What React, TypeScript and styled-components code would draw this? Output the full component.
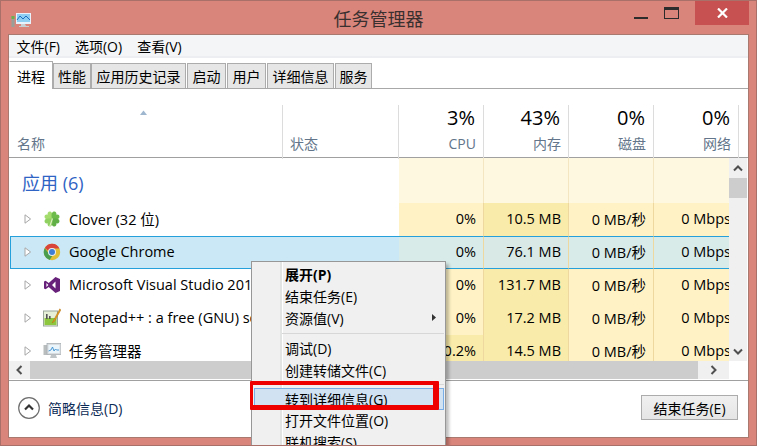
import React from 'react';
import styled, { createGlobalStyle } from 'styled-components';

const GlobalStyle = createGlobalStyle`
  html, body {
    margin: 0;
    padding: 0;
    overflow: hidden;
    background: #d9857b;
  }
  * { box-sizing: border-box; }
`;

const Window = styled.div`
  position: relative;
  width: 757px;
  height: 446px;
  overflow: hidden;
  display: flex;
  flex-direction: column;
  padding: 0 7px 7px;
  background: #d9857b;
  border: 1px solid #a9706a;
  font-family: "Open Sans", "Noto Sans CJK SC", sans-serif;
  font-size: 14px;
  color: #000;
`;

const TitleBar = styled.div`
  position: relative;
  height: 33px;
  flex: none;
  display: flex;
  align-items: center;
  justify-content: center;
  font-size: 18px;
  color: #3a3030;
  padding-top: 1px;
`;

const TitleIcon = styled.svg`
  position: absolute;
  left: 3px;
  top: 10px;
`;

const WindowButtons = styled.div`
  position: absolute;
  right: 0;
  top: 0;
  display: flex;
  align-items: flex-start;
`;

const MinMax = styled.div`
  width: 31px;
  height: 24px;
  display: flex;
  justify-content: center;
`;

const MinIcon = styled.div`
  width: 14px;
  height: 2px;
  margin-top: 16px;
  background: #2c2c2c;
`;

const MaxIcon = styled.div`
  width: 15px;
  height: 12px;
  margin-top: 6px;
  border: 1px solid #2c2c2c;
  border-top-width: 3px;
`;

const CloseButton = styled.div`
  width: 54px;
  height: 24px;
  margin-left: 8px;
  background: #c75050;
  display: flex;
  align-items: center;
  justify-content: center;
`;

const Client = styled.div`
  width: 741px;
  height: 404px;
  flex: none;
  display: flex;
  flex-direction: column;
  background: #fff;
  border: 1px solid #a9786f;
`;

const MenuBar = styled.div`
  height: 23px;
  flex: none;
  display: flex;
  align-items: center;
  padding-top: 1px;
  background: #f4f5f7;
  border-bottom: 2px solid #eceef1;
`;

const MenuEntry = styled.span`
  padding: 0 7.5px;
  white-space: nowrap;
`;

const TabRow = styled.div`
  height: 31px;
  flex: none;
  display: flex;
  align-items: flex-end;
  border-bottom: 1px solid #a8a8a8;
`;

const Tab = styled.div<{ $active?: boolean; $width: number; $gap: number }>`
  width: ${(p) => p.$width}px;
  margin-left: ${(p) => p.$gap}px;
  height: ${(p) => (p.$active ? '28px' : '25px')};
  margin-bottom: ${(p) => (p.$active ? '-1px' : '0')};
  display: flex;
  align-items: center;
  justify-content: center;
  white-space: nowrap;
  background: ${(p) => (p.$active ? '#fff' : '#e6e6e6')};
  border: 1px solid #acacac;
  border-bottom: ${(p) => (p.$active ? 'none' : '0')};
  border-left-color: ${(p) => (p.$active ? '#fff' : '#acacac')};
  position: relative;
`;

const HeaderRow = styled.div`
  height: 69px;
  flex: none;
  padding-top: 16px;
  display: grid;
  grid-template-columns: 274px 116px repeat(4, 85px) 9px;
  border-bottom: 1px solid #a0a0a0;
`;

const HeaderCell = styled.div<{ $align?: 'left' | 'right'; $inset?: number }>`
  display: flex;
  flex-direction: column;
  justify-content: flex-end;
  align-items: ${(p) => (p.$align === 'left' ? 'flex-start' : 'flex-end')};
  padding: 0 7px 5px ${(p) => p.$inset ?? 8}px;
  border-right: 1px solid #dcdcdc;
`;

const SortArrow = styled.svg`
  align-self: center;
  margin: 0 0 19px -6px;
`;

const Percent = styled.div`
  font-size: 20px;
  line-height: 26px;
  margin: 0 1px 3px 0;
`;

const ColumnLabel = styled.div`
  color: #63758a;
  line-height: 20px;
`;

const TableArea = styled.div`
  height: 203px;
  flex: none;
  display: flex;
`;

const Rows = styled.div`
  width: 720px;
  flex: none;
  overflow: hidden;
`;

const Grid = styled.div<{ $height: number }>`
  display: grid;
  grid-template-columns: 274px 116px repeat(4, 85px);
  width: 730px;
  height: ${(p) => p.$height}px;
`;

const GroupName = styled.div`
  grid-column: span 2;
  padding: 10px 0 0 13px;
  font-size: 18px;
  line-height: 30px;
  color: #2f63c4;
`;

const GroupHeat = styled.div`
  background: #fff8e1;
  border-right: 1px solid #f4e6c0;
`;

const NameCell = styled.div<{ $selected?: boolean }>`
  display: flex;
  align-items: center;
  padding: 0 0 2px 13px;
  margin-left: 1px;
  font-size: 14.5px;
  white-space: nowrap;
  overflow: hidden;
  background: ${(p) => (p.$selected ? '#cbe8f6' : '#fff')};
  border: ${(p) => (p.$selected ? '1px solid #26a0da' : '1px solid transparent')};
  border-right: none;
`;

const StatusCell = styled.div<{ $selected?: boolean }>`
  background: ${(p) => (p.$selected ? '#cbe8f6' : '#fff')};
  border-top: ${(p) => (p.$selected ? '1px solid #26a0da' : 'none')};
  border-bottom: ${(p) => (p.$selected ? '1px solid #26a0da' : 'none')};
`;

const HeatCell = styled.div<{ $selected?: boolean; $hot?: boolean }>`
  display: flex;
  align-items: center;
  justify-content: flex-end;
  padding: 0 7px 2px 0;
  font-size: 14.5px;
  white-space: nowrap;
  background: ${(p) =>
    p.$selected ? (p.$hot ? '#d8e9e6' : '#d8ebe9') : p.$hot ? '#f9eba9' : '#fff3c6'};
  border-right: 1px solid #eed8a0;
  border-top: ${(p) => (p.$selected ? '1px solid #26a0da' : 'none')};
  border-bottom: ${(p) => (p.$selected ? '1px solid #26a0da' : 'none')};
`;

const Expander = styled.svg`
  flex: none;
  margin-right: 11px;
`;

const RowIcon = styled.svg`
  flex: none;
  margin-right: 8px;
`;

const VScroll = styled.div`
  width: 18px;
  flex: none;
  display: flex;
  flex-direction: column;
  align-items: stretch;
  background: #f0f0f0;
`;

const ScrollBtn = styled.div`
  height: 20px;
  flex: none;
  display: flex;
  align-items: center;
  justify-content: center;
`;

const VThumb = styled.div`
  height: 20px;
  flex: none;
  background: #cdcdcd;
`;

const VSpacer = styled.div`
  flex: 1;
`;

const HScroll = styled.div`
  width: 720px;
  height: 18px;
  flex: none;
  display: flex;
  background: #f0f0f0;
`;

const HBtn = styled.div`
  width: 21px;
  display: flex;
  align-items: center;
  justify-content: center;
`;

const HThumb = styled.div`
  width: 668px;
  background: #cdcdcd;
`;

const HSpacer = styled.div`
  flex: 1;
  display: flex;
  align-items: center;
  justify-content: center;
`;

const Footer = styled.div`
  height: 57px;
  margin-top: 1px;
  flex: none;
  display: flex;
  align-items: center;
  justify-content: space-between;
  padding: 0 10px 3px 9px;
  border-top: 1px solid #a0a0a0;
`;

const Toggle = styled.div`
  display: flex;
  align-items: center;
  gap: 8px;
  color: #0b2a55;
`;

const EndButton = styled.div`
  width: 97px;
  height: 25px;
  display: flex;
  align-items: center;
  justify-content: center;
  background: linear-gradient(#f0f0f0, #e5e5e5);
  border: 1px solid #acacac;
`;

const ContextMenu = styled.div`
  position: absolute;
  left: 250px;
  top: 260px;
  width: 195px;
  height: 200px;
  padding: 2px 1px;
  background: #f0f0f0;
  border: 1px solid #979797;
  box-shadow: 3px 3px 3px rgba(0, 0, 0, 0.25);

  &::before {
    content: '';
    position: absolute;
    left: 28px;
    top: 0;
    bottom: 0;
    width: 2px;
    background: #e2e3e3;
    border-right: 1px solid #fff;
  }
`;

const MenuItem = styled.div<{ $bold?: boolean; $hover?: boolean }>`
  position: relative;
  height: 22px;
  display: flex;
  align-items: center;
  justify-content: space-between;
  font-weight: ${(p) => (p.$bold ? 700 : 400)};
  white-space: nowrap;
  background: ${(p) => (p.$hover ? '#d1e2f2' : 'transparent')};
  border: ${(p) => (p.$hover ? '1px solid #78aee5' : '1px solid transparent')};
  margin-left: ${(p) => (p.$hover ? '1px' : '0')};
  padding: 0 0 ${(p) => (p.$hover ? '0' : '3px')} ${(p) => (p.$hover ? '30px' : '31px')};
`;

const SubArrow = styled.svg`
  margin-right: 7px;
`;

const MenuSeparator = styled.div<{ $height?: number }>`
  position: relative;
  height: ${(p) => p.$height ?? 8}px;
  margin-left: 29px;
  padding-bottom: 2px;
  display: flex;
  align-items: center;

  &::after {
    content: '';
    display: block;
    width: 100%;
    height: 1px;
    background: #d7d7d7;
  }
`;

const Annotation = styled.div`
  position: absolute;
  left: 249px;
  top: 380px;
  width: 189px;
  height: 29px;
  border-style: solid;
  border-color: #ee0000;
  border-width: 4px 6px 5px 3px;
  border-radius: 1px;
`;

function TitleGlyph() {
  return (
    <TitleIcon width="20" height="18" viewBox="0 0 20 18">
      <rect x="0.5" y="5" width="3" height="11" fill="#9a9f97" />
      <rect x="0.5" y="5" width="3" height="3" fill="#6fae4e" />
      <rect x="5" y="2" width="15" height="11" fill="#e8f2fa" />
      <rect x="6" y="3" width="13" height="8" fill="#8fd0f2" />
      <path d="M6 9l3-4 3 3 3-3 4 4" fill="none" stroke="#1f6fc0" strokeWidth="1" />
      <path d="M10 13h4l1 2h3v1H8v-1h2z" fill="#c9d0d4" />
    </TitleIcon>
  );
}

function Triangle() {
  return (
    <Expander width="8" height="10" viewBox="0 0 8 10">
      <path d="M1 .8v8.4L6.6 5z" fill="#fff" stroke="#a6a6a6" strokeWidth="1" />
    </Expander>
  );
}

const leaf = 'M9 9C5 6.5 4 4 5 2.5 6 1 8 1 9 3c1-2 3-2 4-.5C14 4 13 6.5 9 9z';

function CloverIcon() {
  return (
    <RowIcon width="18" height="18" viewBox="0 0 18 18">
      <path d={leaf} fill="#a4dc6e" transform="rotate(-45 9 9)" />
      <path d={leaf} fill="#6dbb4a" transform="rotate(45 9 9)" />
      <path d={leaf} fill="#5fae46" transform="rotate(135 9 9)" />
      <path d={leaf} fill="#8fd060" transform="rotate(-135 9 9)" />
      <path d="M9.5 8.5L6.5 17" stroke="#dff0c4" strokeWidth="1.1" fill="none" />
    </RowIcon>
  );
}

function ChromeIcon() {
  return (
    <RowIcon width="18" height="18" viewBox="0 0 18 18">
      <circle cx="9" cy="9" r="8.2" fill="#e0bf36" />
      <path d="M1.8 5A8.2 8.2 0 0 1 16.4 5.5H9A3.6 3.6 0 0 0 5.6 8z" fill="#d9453a" />
      <path d="M1.8 5L5.7 10.5A3.6 3.6 0 0 0 9.5 12.6L6.7 16.9A8.2 8.2 0 0 1 1.8 5z" fill="#4a9c4e" />
      <circle cx="9" cy="9" r="4" fill="#e9eef5" />
      <circle cx="9" cy="9" r="3" fill="#3f7fd6" />
    </RowIcon>
  );
}

function StudioIcon() {
  return (
    <RowIcon width="18" height="18" viewBox="0 0 18 18">
      <path
        d="M12.5 1L17 3v12l-4.5 2-6.8-6L2.6 13.3 1 12.4V5.6l1.6-.9L5.7 7zM12.5 5.4L9 9l3.5 3.6zM3.4 7v4l2-2z"
        fill="#68217a"
        fillRule="evenodd"
      />
    </RowIcon>
  );
}

function NotepadIcon() {
  return (
    <RowIcon width="18" height="19" viewBox="0 0 18 19">
      <rect x="0.5" y="3" width="14" height="15" fill="#e6efd8" stroke="#9aa79a" />
      <rect x="1.5" y="10" width="12" height="7" fill="#8cc63f" />
      <rect x="3" y="6" width="1.6" height="5" fill="#555" />
      <rect x="6" y="8" width="1.6" height="3" fill="#555" />
      <path d="M16.8.8L10.5 12.5 9 15l2.4-1.6L17.8 2z" fill="#e8a020" stroke="#b06f10" strokeWidth="0.5" />
    </RowIcon>
  );
}

function ManagerIcon() {
  return (
    <RowIcon width="18" height="18" viewBox="0 0 18 18">
      <rect x="0.5" y="3" width="5" height="10" fill="#b9bdbd" />
      <rect x="4" y="1.5" width="14" height="11" fill="#d9dddf" stroke="#a8b0b4" strokeWidth="0.8" />
      <rect x="5.5" y="3" width="11" height="8" fill="#eaf4fb" />
      <path d="M5.5 9l2.5-1 1.5-3 1.5 4 1.5-2 1 1 2.5 0" fill="none" stroke="#3a8fd0" strokeWidth="0.9" />
      <path d="M8 13h5l1 3H7z" fill="#bfc4c6" />
    </RowIcon>
  );
}

type Row = {
  name: string;
  icon: React.ReactNode;
  cpu: string;
  mem: string;
  selected?: boolean;
  hotCpu?: boolean;
};

const rows: Row[] = [
  { name: 'Clover (32 位)', icon: <CloverIcon />, cpu: '0%', mem: '10.5 MB' },
  { name: 'Google Chrome', icon: <ChromeIcon />, cpu: '0%', mem: '76.1 MB', selected: true },
  { name: 'Microsoft Visual Studio 2013', icon: <StudioIcon />, cpu: '0%', mem: '131.7 MB' },
  { name: 'Notepad++ : a free (GNU) source code editor', icon: <NotepadIcon />, cpu: '0%', mem: '17.2 MB' },
  { name: '任务管理器', icon: <ManagerIcon />, cpu: '0.2%', mem: '14.5 MB', hotCpu: true },
];

const tabs = [
  { label: '进程', width: 44, gap: 0 },
  { label: '性能', width: 38, gap: 0 },
  { label: '应用历史记录', width: 95, gap: 0 },
  { label: '启动', width: 39, gap: 1 },
  { label: '用户', width: 39, gap: 1 },
  { label: '详细信息', width: 67, gap: 1 },
  { label: '服务', width: 37, gap: 1 },
];
const menus = ['文件(F)', '选项(O)', '查看(V)'];
const columns = [
  { value: '3%', label: 'CPU' },
  { value: '43%', label: '内存' },
  { value: '0%', label: '磁盘' },
  { value: '0%', label: '网络' },
];

export default function App() {
  return (
    <>
      <GlobalStyle />
      <Window>
        <TitleBar>
          <TitleGlyph />
          任务管理器
          <WindowButtons>
            <MinMax>
              <MinIcon />
            </MinMax>
            <MinMax>
              <MaxIcon />
            </MinMax>
            <CloseButton>
              <svg width="11" height="10" viewBox="0 0 11 10">
                <path d="M1 .5l9 9M10 .5l-9 9" stroke="#fff" strokeWidth="2.2" fill="none" />
              </svg>
            </CloseButton>
          </WindowButtons>
        </TitleBar>

        <Client>
          <MenuBar>
            {menus.map((m) => (
              <MenuEntry key={m}>{m}</MenuEntry>
            ))}
          </MenuBar>

          <TabRow>
            {tabs.map((t, i) => (
              <Tab key={t.label} $active={i === 0} $width={t.width} $gap={t.gap}>
                {t.label}
              </Tab>
            ))}
          </TabRow>

          <HeaderRow>
            <HeaderCell $align="left">
              <SortArrow width="7" height="5" viewBox="0 0 7 5">
                <path d="M0 5l3.5-4.5L7 5z" fill="#9fb7cf" />
              </SortArrow>
              <ColumnLabel>名称</ColumnLabel>
            </HeaderCell>
            <HeaderCell $align="left" $inset={7}>
              <ColumnLabel>状态</ColumnLabel>
            </HeaderCell>
            {columns.map((c) => (
              <HeaderCell key={c.label}>
                <Percent>{c.value}</Percent>
                <ColumnLabel>{c.label}</ColumnLabel>
              </HeaderCell>
            ))}
          </HeaderRow>

          <TableArea>
            <Rows>
              <Grid $height={45}>
                <GroupName>应用 (6)</GroupName>
                <GroupHeat />
                <GroupHeat />
                <GroupHeat />
                <GroupHeat />
              </Grid>
              {rows.map((r) => (
                <Grid key={r.name} $height={33}>
                  <NameCell $selected={r.selected}>
                    <Triangle />
                    {r.icon}
                    {r.name}
                  </NameCell>
                  <StatusCell $selected={r.selected} />
                  <HeatCell $selected={r.selected} $hot={r.hotCpu}>
                    {r.cpu}
                  </HeatCell>
                  <HeatCell $selected={r.selected} $hot>
                    {r.mem}
                  </HeatCell>
                  <HeatCell $selected={r.selected}>0 MB/秒</HeatCell>
                  <HeatCell $selected={r.selected}>0 Mbps</HeatCell>
                </Grid>
              ))}
            </Rows>
            <VScroll>
              <ScrollBtn>
                <svg width="10" height="7" viewBox="0 0 10 7">
                  <path d="M1 5.5l4-4 4 4" stroke="#505050" strokeWidth="2" fill="none" />
                </svg>
              </ScrollBtn>
              <VThumb />
              <VSpacer />
              <ScrollBtn>
                <svg width="10" height="7" viewBox="0 0 10 7">
                  <path d="M1 1.5l4 4 4-4" stroke="#505050" strokeWidth="2" fill="none" />
                </svg>
              </ScrollBtn>
            </VScroll>
          </TableArea>

          <HScroll>
            <HBtn>
              <svg width="7" height="10" viewBox="0 0 7 10">
                <path d="M5.5 1l-4 4 4 4" stroke="#505050" strokeWidth="2" fill="none" />
              </svg>
            </HBtn>
            <HThumb />
            <HSpacer>
              <svg width="7" height="10" viewBox="0 0 7 10">
                <path d="M1.5 1l4 4-4 4" stroke="#505050" strokeWidth="2" fill="none" />
              </svg>
            </HSpacer>
          </HScroll>

          <Footer>
            <Toggle>
              <svg width="22" height="22" viewBox="0 0 22 22">
                <circle cx="11" cy="11" r="10.3" fill="#fff" stroke="#6e6e6e" strokeWidth="1.2" />
                <path d="M7 12.5l4-4 4 4" stroke="#333" strokeWidth="2.2" fill="none" />
              </svg>
              简略信息(D)
            </Toggle>
            <EndButton>结束任务(E)</EndButton>
          </Footer>
        </Client>

        <ContextMenu>
          <MenuItem $bold>展开(P)</MenuItem>
          <MenuItem>结束任务(E)</MenuItem>
          <MenuItem>
            资源值(V)
            <SubArrow width="4" height="7" viewBox="0 0 4 7">
              <path d="M0 0l4 3.5L0 7z" fill="#333" />
            </SubArrow>
          </MenuItem>
          <MenuSeparator />
          <MenuItem>调试(D)</MenuItem>
          <MenuItem>创建转储文件(C)</MenuItem>
          <MenuSeparator $height={6} />
          <MenuItem $hover>转到详细信息(G)</MenuItem>
          <MenuItem>打开文件位置(O)</MenuItem>
          <MenuItem>联机搜索(S)</MenuItem>
        </ContextMenu>
        <Annotation />
      </Window>
    </>
  );
}
